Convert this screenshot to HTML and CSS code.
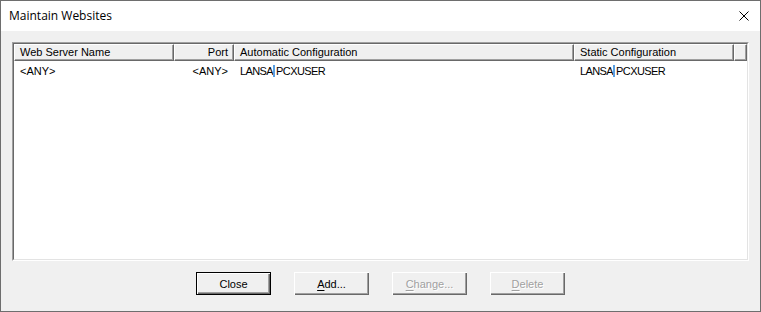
FILE: index.html
```html
<!DOCTYPE html>
<html>
<head>
<meta charset="utf-8">
<link rel="stylesheet" href="styles.css">
</head>
<body>
<div class="window">
  <div class="titlebar">
    <span class="title">Maintain Websites</span>
    <span class="close-x" aria-label="Close">
      <svg width="10" height="10" viewBox="0 0 10 10"><path d="M0.5 0.5 L9.5 9.5 M9.5 0.5 L0.5 9.5" stroke="#000" stroke-width="1" fill="none"/></svg>
    </span>
  </div>
  <div class="content">
    <div class="listview">
      <div class="lv-inner">
        <div class="lv-header">
          <div class="hcell">Web Server Name</div>
          <div class="hcell right">Port</div>
          <div class="hcell">Automatic Configuration</div>
          <div class="hcell">Static Configuration</div>
          <div class="hcell filler"></div>
        </div>
        <div class="lv-row">
          <div class="cell">&lt;ANY&gt;</div>
          <div class="cell right">&lt;ANY&gt;</div>
          <div class="cell upper">LANSA<span class="caret"></span>PCXUSER</div>
          <div class="cell upper">LANSA<span class="caret"></span>PCXUSER</div>
          <div class="cell"></div>
        </div>
      </div>
    </div>
    <div class="buttons">
      <button class="btn default">Close</button>
      <button class="btn"><u>A</u>dd...</button>
      <button class="btn disabled"><u>C</u>hange...</button>
      <button class="btn disabled"><u>D</u>elete</button>
    </div>
  </div>
</div>
</body>
</html>
```
FILE: styles.css
```css
* { box-sizing: border-box; }
html, body { margin: 0; padding: 0; }
body { width: 761px; height: 312px; overflow: hidden; background: #f0f0f0; }

.window {
  width: 761px;
  height: 312px;
  border: 1px solid #6e6e6e;
  background: #f0f0f0;
  display: flex;
  flex-direction: column;
  font-family: "Liberation Sans", Arial, sans-serif;
  font-size: 11px;
  color: #000;
}

.titlebar {
  height: 30px;
  background: #fff;
  display: flex;
  align-items: center;
  justify-content: space-between;
  padding: 0 11px 0 8px;
  flex: none;
}
.title {
  font-family: "Open Sans", "Noto Sans", sans-serif;
  font-size: 12px;
  color: #000;
  position: relative;
  top: -1px;
}
.close-x { display: flex; width: 10px; height: 10px; }

.content {
  flex: 1;
  display: flex;
  flex-direction: column;
  padding: 11px 11px 0 11px;
}

.listview {
  height: 219px;
  border-top: 1px solid #a0a0a0;
  border-left: 1px solid #a0a0a0;
  border-right: 1px solid #fff;
  border-bottom: 1px solid #fff;
  flex: none;
}
.lv-inner {
  height: 100%;
  background: #fff;
  border-top: 1px solid #696969;
  border-left: 1px solid #696969;
  border-right: 1px solid #e3e3e3;
  border-bottom: 1px solid #e3e3e3;
}

.lv-header, .lv-row {
  display: grid;
  grid-template-columns: 160px 60px 340px 160px 1fr;
}
.hcell {
  height: 17px;
  background: #f0f0f0;
  border-top: 1px solid #fff;
  border-left: 1px solid #fff;
  border-right: 1px solid #696969;
  border-bottom: 1px solid #696969;
  box-shadow: inset -1px -1px 0 #a0a0a0;
  padding: 0 5px;
  line-height: 15px;
  white-space: nowrap;
  overflow: hidden;
}
.hcell.filler { padding: 0; }
.right { text-align: right; }

.lv-row { height: 18px; line-height: 18px; padding-top: 1px; }
.cell { padding: 0 6px; white-space: nowrap; }
.cell.right { padding-right: 6px; }
.cell.upper { letter-spacing: -0.6px; }
.caret {
  display: inline-block;
  width: 2px;
  height: 12px;
  background: #5a9ee0;
  vertical-align: -2px;
  margin: 0 1px 0 0;
}

.buttons {
  display: flex;
  justify-content: center;
  gap: 23px;
  margin-top: 11px;
}
.btn {
  width: 75px;
  height: 23px;
  font-family: "Liberation Sans", Arial, sans-serif;
  font-size: 11px;
  color: #000;
  background: #f0f0f0;
  border: none;
  padding: 0;
  box-shadow: inset 1px 1px 0 #fff, inset -1px -1px 0 #696969, inset -2px -2px 0 #a0a0a0;
}
.btn.default {
  border: 1px solid #000;
  box-shadow: inset 1px 1px 0 #fff, inset -1px -1px 0 #696969, inset -2px -2px 0 #a0a0a0;
}
.btn.disabled {
  color: #a0a0a0;
  text-shadow: 1px 1px 0 #fff;
}
.btn u { text-decoration: underline; text-underline-offset: 2px; }
```
